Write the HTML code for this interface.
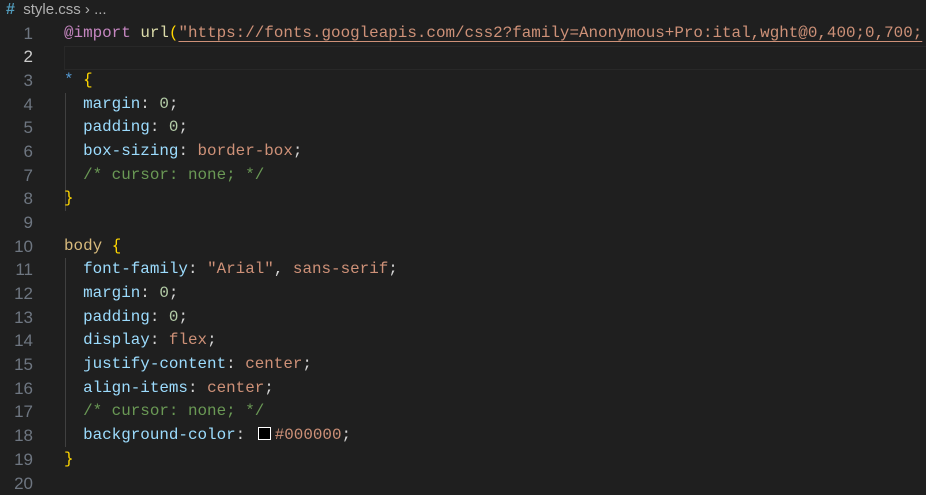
<!DOCTYPE html>
<html><head><style>
html,body{margin:0;padding:0;background:#1f1f1f;width:926px;height:491px;overflow:hidden}
#bc{position:absolute;left:6px;top:0;height:20px;font:15px "Liberation Sans",sans-serif;color:#b0b0b0;line-height:20px;white-space:pre}
#bc .h{color:#519aba;font-weight:bold;font-size:16px}
.ln{position:absolute;left:0;width:33px;text-align:right;color:#6e7681;font:17px "Liberation Sans",sans-serif;line-height:23.68px}
.ln.cur{color:#cccccc}
.code{position:absolute;left:64px;white-space:pre;font:15.9px "Liberation Mono",monospace;line-height:23.68px;color:#d4d4d4}
.p{color:#9cdcfe}.v{color:#ce9178}.n{color:#b5cea8}.c{color:#6a9955}.a{color:#c586c0}.f{color:#dcdcaa}.b{color:#ffd700}.s{color:#d7ba7d}.st{color:#569cd6}
.u{text-decoration:underline;text-decoration-color:#ce9178;text-underline-offset:4px}
.sw{display:inline-block;width:11px;height:11px;border:1px solid #fff;background:#000;margin:0 4px 0 3px;vertical-align:-1px}
.g{position:absolute;left:65px;width:1px;background:#404040}
#curline{position:absolute;left:64px;right:0;top:44px;height:22px;border:1px solid #282828;border-right:none}
#wrap{position:absolute;left:0;top:1.5px;width:926px;height:491px}
</style></head><body>
<div id="bc"><span class="h">#</span>  style.css › ...</div>
<div id="wrap">
<div id="curline"></div>
<div class="g" style="top:91px;height:118px"></div>
<div class="g" style="top:256px;height:189px"></div>
<div class="ln" style="top:20px">1</div><div class="code" style="top:20px"><span class="a">@import</span> <span class="f">url</span><span class="b">(</span><span class="v u">"https://fonts.googleapis.com/css2?family=Anonymous+Pro:ital,wght@0,400;0,700;</span></div>
<div class="ln cur" style="top:43.7px">2</div>
<div class="ln" style="top:67.4px">3</div><div class="code" style="top:67.4px"><span class="st">*</span> <span class="b">{</span></div>
<div class="ln" style="top:91px">4</div><div class="code" style="top:91px">  <span class="p">margin</span>: <span class="n">0</span>;</div>
<div class="ln" style="top:114.7px">5</div><div class="code" style="top:114.7px">  <span class="p">padding</span>: <span class="n">0</span>;</div>
<div class="ln" style="top:138.4px">6</div><div class="code" style="top:138.4px">  <span class="p">box-sizing</span>: <span class="v">border-box</span>;</div>
<div class="ln" style="top:162px">7</div><div class="code" style="top:162px">  <span class="c">/* cursor: none; */</span></div>
<div class="ln" style="top:185.8px">8</div><div class="code" style="top:185.8px"><span class="b">}</span></div>
<div class="ln" style="top:209.4px">9</div>
<div class="ln" style="top:233.1px">10</div><div class="code" style="top:233.1px"><span class="s">body</span> <span class="b">{</span></div>
<div class="ln" style="top:256.8px">11</div><div class="code" style="top:256.8px">  <span class="p">font-family</span>: <span class="v">"Arial"</span>, <span class="v">sans-serif</span>;</div>
<div class="ln" style="top:280.5px">12</div><div class="code" style="top:280.5px">  <span class="p">margin</span>: <span class="n">0</span>;</div>
<div class="ln" style="top:304.2px">13</div><div class="code" style="top:304.2px">  <span class="p">padding</span>: <span class="n">0</span>;</div>
<div class="ln" style="top:327.8px">14</div><div class="code" style="top:327.8px">  <span class="p">display</span>: <span class="v">flex</span>;</div>
<div class="ln" style="top:351.5px">15</div><div class="code" style="top:351.5px">  <span class="p">justify-content</span>: <span class="v">center</span>;</div>
<div class="ln" style="top:375.2px">16</div><div class="code" style="top:375.2px">  <span class="p">align-items</span>: <span class="v">center</span>;</div>
<div class="ln" style="top:398.9px">17</div><div class="code" style="top:398.9px">  <span class="c">/* cursor: none; */</span></div>
<div class="ln" style="top:422.6px">18</div><div class="code" style="top:422.6px">  <span class="p">background-color</span>: <span class="sw"></span><span class="v">#000000</span>;</div>
<div class="ln" style="top:446.2px">19</div><div class="code" style="top:446.2px"><span class="b">}</span></div>
<div class="ln" style="top:470px">20</div>
</div>
</body></html>
